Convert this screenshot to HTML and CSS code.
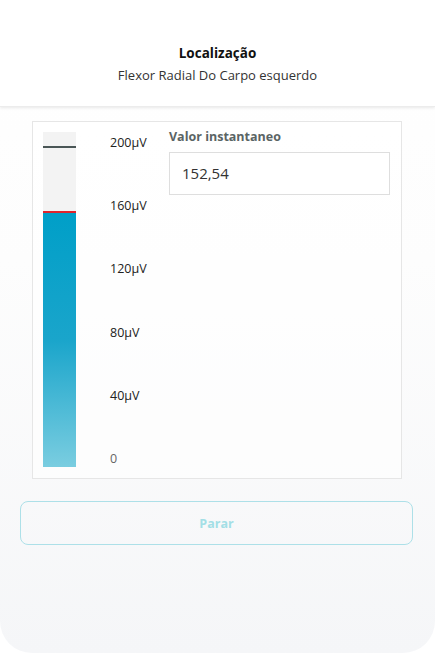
FILE: index.html
```html
<!DOCTYPE html>
<html lang="pt">
<head>
  <meta charset="UTF-8">
  <title>Localização</title>
  <meta name="viewport" content="width=device-width, initial-scale=1.0">
  <link rel="stylesheet" href="styles.css">
</head>
<body>

<div class="screen">

  <header>
    <div class="title">Localização</div>
    <div class="subtitle">Flexor Radial Do Carpo esquerdo</div>
  </header>

  <!-- medidor -->
  <div class="meter-card">
    <div class="bar">
      <div class="max-line" style="bottom: 95.2%"></div>
      <div class="fill" style="height: 76.4%"></div>
    </div>

    <div class="scale">
      <span>200µV</span>
      <span>160µV</span>
      <span>120µV</span>
      <span>80µV</span>
      <span>40µV</span>
      <span>0</span>
    </div>

    <div class="value-block">
      <label>Valor instantaneo</label>
      <div class="value-box">152,54</div>
    </div>
  </div>

  <button class="stop">Parar</button>

</div>

</body>
</html>
```

FILE: styles.css
```css
body {
  margin: 0;
  padding: 0;
  background: #fff;
  font-family: "Open Sans", "Noto Sans", sans-serif;
  color: #222;
}

.screen {
  height: 653px;
  background: linear-gradient(#ffffff 0%, #fdfdfd 40%, #f5f6f8 100%);
  border-radius: 0 0 32px 32px;
  overflow: hidden;
  box-sizing: border-box;
}

header {
  background: #fff;
  height: 107px;
  padding-top: 44px;
  box-sizing: border-box;
  text-align: center;
  box-shadow: 0 1px 3px rgba(0, 0, 0, 0.09);
  border-bottom: 1px solid #ececec;
}

.title {
  font-size: 13.5px;
  font-weight: bold;
  color: #111;
  line-height: 19px;
}

.subtitle {
  font-size: 13px;
  color: #333;
  line-height: 19px;
  margin-top: 3px;
}

.meter-card {
  display: flex;
  margin: 14px 33px 0 32px;
  height: 358px;
  box-sizing: border-box;
  padding: 10px 11px 11px 10px;
  border: 1px solid #e6e6e6;
  background: rgba(255, 255, 255, 0.6);
}

.bar {
  position: relative;
  width: 33px;
  background: #f3f3f3;
  flex-shrink: 0;
}

.fill {
  position: absolute;
  left: 0;
  right: 0;
  bottom: 0;
  box-sizing: border-box;
  background: linear-gradient(#009fc8 0%, #1aa5cb 50%, #7acde0 100%);
  border-top: 2px solid #e0242c;
}

.max-line {
  position: absolute;
  left: 0;
  right: 0;
  height: 2px;
  background: #4a5656;
}

.scale {
  display: flex;
  flex-direction: column;
  justify-content: space-between;
  margin-left: 34px;
  width: 59px;
  padding-top: 3px;
  font-size: 12.5px;
  line-height: 16px;
  color: #222;
}

.scale span:last-child {
  color: #666;
}

.value-block {
  flex: 1;
  margin-top: -3px;
}

.value-block label {
  display: block;
  font-size: 12.5px;
  font-weight: bold;
  color: #5a6464;
  line-height: 16px;
}

.value-box {
  margin-top: 7px;
  height: 43px;
  box-sizing: border-box;
  border: 1px solid #dedede;
  background: #fff;
  padding: 0 12px;
  font-size: 15px;
  line-height: 41px;
  color: #333;
}

.stop {
  display: block;
  margin: 22px 22px 0 20px;
  width: 393px;
  height: 44px;
  background: transparent;
  border: 1.5px solid #ade0e8;
  border-radius: 8px;
  color: #a3dfe6;
  font-family: "Open Sans", "Noto Sans", sans-serif;
  font-size: 12.5px;
  font-weight: bold;
}
```
